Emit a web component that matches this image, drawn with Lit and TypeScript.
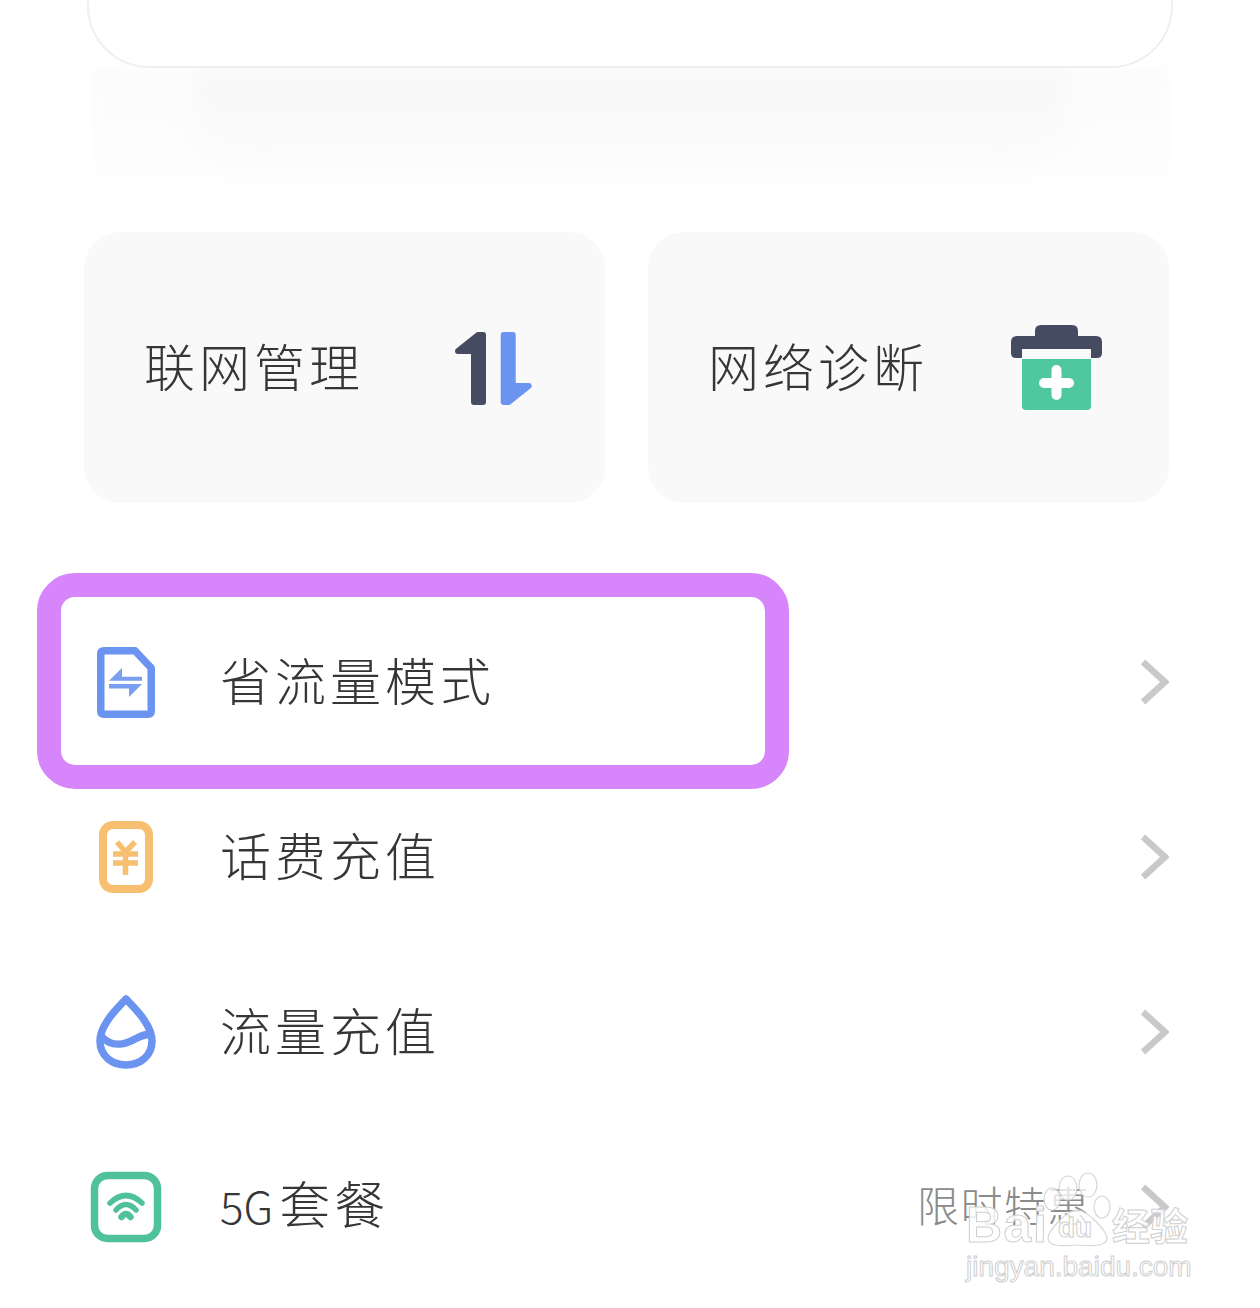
import { LitElement, html, css, svg } from "lit";
import { customElement } from "lit/decorators.js";

const chevron = html`<svg class="chev" viewBox="0 0 28 46" width="28" height="46"><path d="M2 3 L24 23 L2 43" fill="none" stroke="#c9c9c9" stroke-width="6.5"/></svg>`;

const docIcon = html`<svg viewBox="0 0 66 78" width="66" height="78">
  <path d="M11 7.75 H42 L58.25 25 V68 Q58.25 71.25 55 71.25 H11 Q7.75 71.25 7.75 68 V11 Q7.75 7.75 11 7.75 Z" fill="#fff" stroke="#6a94f0" stroke-width="7.5" stroke-linejoin="round"/>
  <path d="M16 37.7 L29 25 V33.7 H49 V37.7 Z M49 41 L36 54 V45.5 H16 V41 Z" fill="#7a9ff0"/>
</svg>`;
const yenIcon = html`<svg viewBox="0 0 60 78" width="60" height="78">
  <rect x="7" y="7" width="46" height="64" rx="10" fill="#fff" stroke="#f6c070" stroke-width="8"/>
  <path d="M21 24 L29.5 34 L39 24 M17 36 H42 M17 45 H42 M29.5 34 V57" fill="none" stroke="#f6c070" stroke-width="5.5"/>
</svg>`;
const dropIcon = html`<svg viewBox="0 0 66 78" width="66" height="78">
  <path d="M33 6 C28 12 7 30 7 48 C7 63 19 72 33 72 C47 72 59 63 59 48 C59 30 38 12 33 6 Z" fill="#fff" stroke="#6a94f0" stroke-width="7.5" stroke-linejoin="round"/>
  <path d="M9 44 C20 56 35 50 42 46 C48 43 54 40 60 42" fill="none" stroke="#6a94f0" stroke-width="7.5"/>
</svg>`;
const wifiIcon = html`<svg viewBox="0 0 74 78" width="74" height="78">
  <rect x="5.5" y="7.5" width="63" height="63" rx="13" fill="#fff" stroke="#4fc29d" stroke-width="7.5"/>
  <path d="M21 35 Q37 20 53 35 M27 42 Q37 31 47 42" fill="none" stroke="#4fc29d" stroke-width="5.5" stroke-linecap="round"/>
  <path d="M32.5 49 Q37 43 41.5 49" fill="none" stroke="#4fc29d" stroke-width="6.5" stroke-linecap="round"/>
</svg>`;

const rows = [
  { icon: docIcon, label: html`省流量模式`, note: "" },
  { icon: yenIcon, label: html`话费充值`, note: "" },
  { icon: dropIcon, label: html`流量充值`, note: "" },
  { icon: wifiIcon, label: html`<span class="lat">5G</span>套餐`, note: "限时特惠" },
];

@customElement("app-root")
export class AppRoot extends LitElement {
  static styles = css`
    :host {
      display: block;
      position: relative;
      width: 1260px;
      height: 1308px;
      overflow: hidden;
      background: #fff;
      font-family: "Noto Sans CJK SC", "Noto Sans", sans-serif;
      font-weight: 300;
      color: #363636;
    }
    .hero {
      height: 66px;
      margin: 0 87px;
      background: #fff;
      border: 2px solid #efefef;
      border-top: 0;
      border-radius: 0 0 62px 62px;
      position: relative;
      z-index: 1;
    }
    .glow {
      height: 140px;
      margin: 0 90px 24px 92px;
      padding: 0 100px;
      background: linear-gradient(#fcfcfc, #fdfdfd 60%, #fff);
      filter: blur(4px);
    }
    .glow-in {
      height: 100px;
      background: linear-gradient(#f8f8f8, #fbfbfb);
      border-radius: 0 0 60px 60px;
      filter: blur(10px);
    }
    .cards {
      display: grid;
      grid-template-columns: 521px 521px;
      gap: 43px;
      margin-left: 84px;
    }
    .card {
      height: 271px;
      border-radius: 36px;
      background: #f9f9f9;
      display: flex;
      align-items: center;
      justify-content: space-between;
      padding: 0 70px 0 60px;
      box-sizing: border-box;
    }
    .card.b { padding-right: 64px; }
    .label {
      font-size: 51px;
      letter-spacing: 4px;
      line-height: 60px;
      padding-bottom: 6px;
      white-space: nowrap;
    }
    .lat { font-size: 44px; letter-spacing: 0; margin-right: 6px; }
    .list { margin: 91px 91px 0 84px; }
    .row {
      height: 175px;
      display: flex;
      align-items: center;
    }
    .ic {
      width: 84px;
      flex: none;
      display: flex;
      justify-content: center;
      margin-right: 52px;
    }
    .grow { flex: 1; }
    .note {
      font-size: 42px;
      letter-spacing: 1.5px;
      color: #8b8b8b;
      margin-right: 50px;
      padding-bottom: 6px;
    }
    .chev { flex: none; }
    .mark {
      position: absolute;
      left: 37px;
      top: 573px;
      width: 752px;
      height: 216px;
      box-sizing: border-box;
      border: 24px solid #d685fb;
      border-radius: 38px;
      pointer-events: none;
    }
    .wm {
      position: absolute;
      left: 960px;
      top: 1170px;
      width: 240px;
      height: 120px;
      font-family: "Liberation Sans", sans-serif;
      color: rgba(255, 255, 255, 0.85);
      -webkit-text-stroke: 1px #cfcfcf;
      pointer-events: none;
    }
    .paw { position: absolute; left: 80px; top: 0; }
    .bai, .du, .jy, .url { position: absolute; white-space: nowrap; line-height: 1; }
    .bai { left: 6px; top: 30px; font-size: 50px; font-weight: 700; letter-spacing: 1.5px; }
    .du { left: 98px; top: 44px; font-size: 28px; font-weight: 700; }
    .jy { left: 152px; top: 35px; font-size: 38px; font-weight: 700; font-family: "Noto Sans CJK SC", sans-serif; }
    .url { left: 6px; top: 83px; font-size: 28px; }
  `;

  render() {
    return html`
      <div class="hero"></div>
      <div class="glow"><div class="glow-in"></div></div>
      <div class="cards">
        <div class="card">
          <span class="label">联网管理</span>
          <svg viewBox="450 328 85 80" width="85" height="80">
            <path d="M483 335 V402 H474 V351 H458 L478 335 Z" fill="#454b60" stroke="#454b60" stroke-width="6" stroke-linejoin="round"/>
            <path d="M503.7 402 V335 H512.7 V386 H528.7 L508.7 402 Z" fill="#6a94f0" stroke="#6a94f0" stroke-width="6" stroke-linejoin="round"/>
          </svg>
        </div>
        <div class="card b">
          <span class="label">网络诊断</span>
          <svg viewBox="1008 324 97 90" width="97" height="90">
            <path d="M1022 360 H1091 V407 Q1091 411 1087 411 H1026 Q1022 411 1022 407 Z" fill="#4fc79f"/>
            <path d="M1044 384 H1069 M1056.5 371 V396" fill="none" stroke="#fff" stroke-width="10" stroke-linecap="round"/>
            <path d="M1035 337 V332 Q1035 326 1041 326 H1072 Q1078 326 1078 332 V337 H1096 Q1102 337 1102 343 V354 Q1102 359 1097 359 H1091 V350 H1022 V359 H1016 Q1011 359 1011 354 V343 Q1011 337 1017 337 Z" fill="#454b60"/>
          </svg>
        </div>
      </div>
      <div class="list">
        ${rows.map(
          (r) => html`<div class="row">
            <div class="ic">${r.icon}</div>
            <span class="label">${r.label}</span>
            <span class="grow"></span>
            ${r.note ? html`<span class="note">${r.note}</span>` : ""}
            ${chevron}
          </div>`
        )}
      </div>
      <div class="mark"></div>
      <div class="wm">
        <svg class="paw" viewBox="0 0 80 80" width="80" height="80">
          ${svg`<g fill="rgba(255,255,255,.75)" stroke="#d6d6d6" stroke-width="1.2">
            <ellipse cx="28" cy="18" rx="9" ry="12"/>
            <ellipse cx="48" cy="15" rx="9" ry="12"/>
            <ellipse cx="12" cy="29" rx="8" ry="11"/>
            <ellipse cx="62" cy="37" rx="8" ry="11"/>
            <path d="M37 40 C48 40 67 62 67 68 C67 77 52 76 37 75 C22 76 8 77 8 68 C8 62 26 40 37 40 Z"/>
          </g>`}
        </svg>
        <span class="bai">Bai</span>
        <span class="du">du</span>
        <span class="jy">经验</span>
        <span class="url">jingyan.baidu.com</span>
      </div>
    `;
  }
}
